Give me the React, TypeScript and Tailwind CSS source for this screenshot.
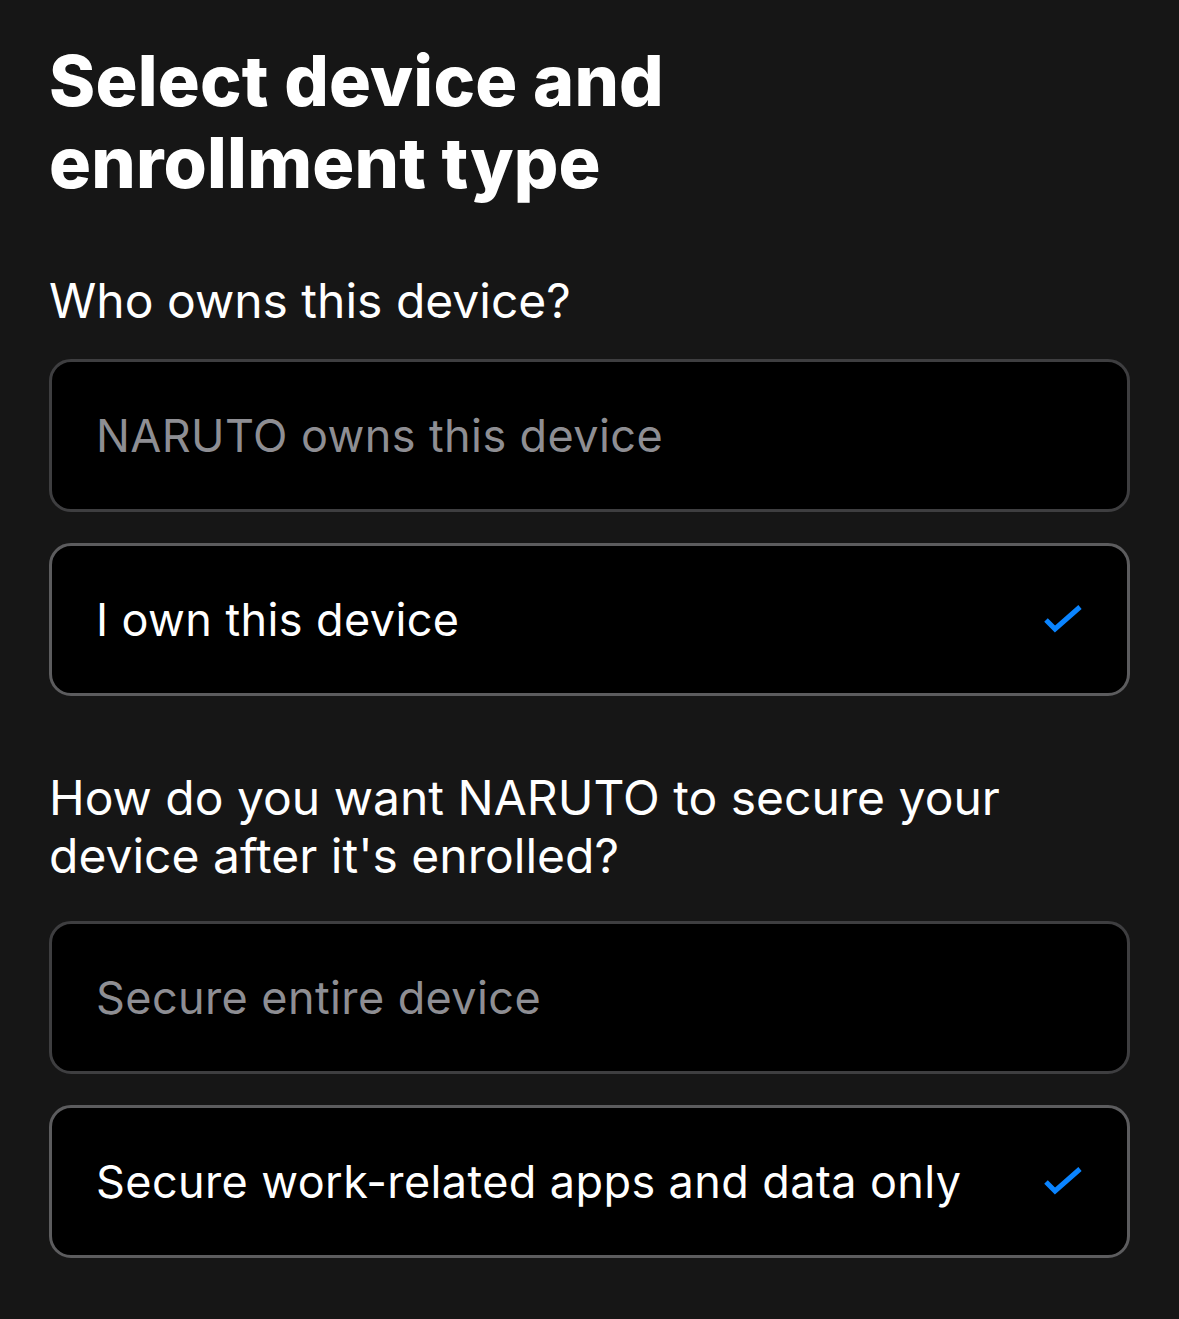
import React from "react";

function Check() {
  return (
    <svg width="40" height="32" viewBox="0 0 40 32" className="shrink-0">
      <path d="M3 16 L12 25 L37 3" stroke="#0a84ff" strokeWidth="5" fill="none" strokeLinecap="butt" strokeLinejoin="miter" />
    </svg>
  );
}

function Option({ label, selected }: { label: string; selected: boolean }) {
  return (
    <div
      className={`flex h-[153px] items-center justify-between rounded-[22px] border-[3px] bg-black pl-[44px] pr-[44px] ${
        selected ? "border-[#5c5c5e]" : "border-[#3e3e40]"
      }`}
    >
      <span className={`text-[45px] leading-none tracking-[0.4px] ${selected ? "text-white" : "text-[#8e8e93]"}`}>
        {label}
      </span>
      {selected && <Check />}
    </div>
  );
}

export default function App() {
  return (
    <div
      className="min-h-[1319px] w-[1179px] bg-[#161616] pl-[49px] pr-[49px] pt-[40px]"
      style={{ fontFamily: "Inter, 'Noto Sans', sans-serif" }}
    >
      <h1 className="text-[70px] font-extrabold leading-[82px] tracking-[0.2px] text-white">
        Select device and
        <br />
        enrollment type
      </h1>
      <p className="mt-[68px] text-[48px] leading-[58px] text-white">Who owns this device?</p>
      <div className="mt-[29px] flex flex-col gap-[31px]">
        <Option label="NARUTO owns this device" selected={false} />
        <Option label="I own this device" selected={true} />
      </div>
      <p className="mt-[73px] text-[48px] leading-[58px] text-white">
        How do you want NARUTO to secure your
        <br />
        device after it's enrolled?
      </p>
      <div className="mt-[36px] flex flex-col gap-[31px]">
        <Option label="Secure entire device" selected={false} />
        <Option label="Secure work-related apps and data only" selected={true} />
      </div>
    </div>
  );
}
